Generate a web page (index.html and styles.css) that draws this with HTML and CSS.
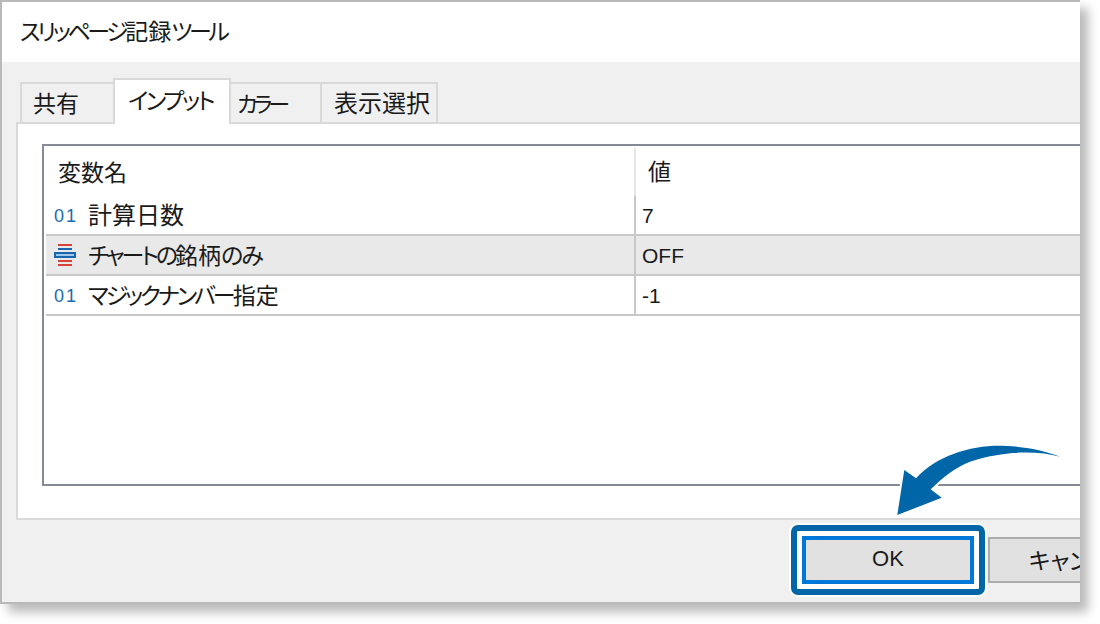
FILE: index.html
```html
<!DOCTYPE html>
<html lang="ja">
<head>
<meta charset="utf-8">
<title>スリッページ記録ツール</title>
<link rel="stylesheet" href="styles.css">
</head>
<body>
<div class="window">
  <div class="title"><span class="kana">スリッページ</span>記録<span class="kana">ツール</span></div>
  <div class="content">
    <div class="tabs">
      <div class="tab tab-first">共有</div>
      <div class="tab tab-active">インプット</div>
      <div class="tab tab-color">カラー</div>
      <div class="tab tab-show">表示選択</div>
    </div>
    <div class="panel">
      <div class="table">
        <div class="row row-head">
          <div class="cell cell-name">変数名</div>
          <div class="cell cell-value">値</div>
        </div>
        <div class="row">
          <div class="cell cell-name"><span class="num-icon">01</span>計算日数</div>
          <div class="cell cell-value">7</div>
        </div>
        <div class="row row-alt">
          <div class="cell cell-name">
            <svg class="list-icon" viewBox="0 0 22 22" aria-hidden="true">
              <rect x="4" y="0" width="14" height="2" fill="#d8403a"/>
              <rect x="4" y="4" width="14" height="2" fill="#1a66ad"/>
              <rect x="0" y="8" width="22" height="6" fill="#1a66ad"/>
              <rect x="2" y="10" width="18" height="2" fill="#9cc8ec"/>
              <rect x="4" y="16" width="14" height="2" fill="#d8403a"/>
              <rect x="4" y="20" width="14" height="2" fill="#d8403a"/>
            </svg><span class="name-text"><span class="kana-row">チャートの</span>銘柄<span class="hira">のみ</span></span></div>
          <div class="cell cell-value">OFF</div>
        </div>
        <div class="row">
          <div class="cell cell-name"><span class="num-icon">01</span><span class="name-text"><span class="kana-row">マジックナンバー</span>指定</span></div>
          <div class="cell cell-value">-1</div>
        </div>
      </div>
    </div>
    <div class="footer">
      <div class="ok-ring"><div class="btn btn-ok">OK</div></div>
      <div class="btn btn-cancel">キャンセル</div>
    </div>
  </div>
  <svg class="arrow" viewBox="0 0 180 90" aria-hidden="true">
    <path d="M9.3 79 L16.3 34 L28 42.3 C50 18 88 8 118.7 10 C140 11 158 15 172 20.7 C150 15 118 14 82 25.7 C68 31 54 42 42.7 53.3 L53.7 61.7 Z" fill="#0066a8" stroke="#fff" stroke-width="4" paint-order="stroke"/>
  </svg>
</div>
</body>
</html>
```
FILE: styles.css
```css
* { box-sizing: border-box; }
html, body { margin: 0; padding: 0; background: #fff; }
body {
  width: 1100px;
  height: 624px;
  overflow: hidden;
  font-family: "Noto Sans CJK JP", "Noto Sans", sans-serif;
  font-size: 24px;
  color: #1a1a1a;
  font-feature-settings: "palt";
}
.kana { letter-spacing: -3.4px; }
.kana-row { letter-spacing: -3px; }
.hira { letter-spacing: -2px; }
.name-text { font-size: 23px; }
.window {
  position: relative;
  width: 1080px;
  height: 604px;
  border: 2px solid #b9b9b9;
  border-right: 0;
  background: #f0f0f0;
  display: flex;
  flex-direction: column;
  box-shadow: 8px 8px 10px rgba(0, 0, 0, 0.28);
}
.title {
  height: 60px;
  flex: none;
  background: #fff;
  padding: 0 0 4px 18px;
  display: flex;
  align-items: center;
  font-size: 23px;
}
.content {
  flex: 1;
  min-height: 0;
  overflow: hidden;
  padding: 16px 0 0 14px;
}
.tabs {
  display: flex;
  align-items: flex-end;
  height: 46px;
  padding-left: 4px;
  position: relative;
  z-index: 1;
  margin-bottom: -2px;
}
.tab {
  height: 40px;
  flex: none;
  border: 2px solid #d9d9d9;
  border-bottom: 0;
  margin-left: -2px;
  margin-bottom: 2px;
  display: flex;
  align-items: center;
  line-height: 1;
  padding-bottom: 2px;
  font-size: 23px;
}
.tab-first { width: 95px; margin-left: 0; padding-left: 11px; }
.tab-active { width: 118px; height: 46px; margin-bottom: 0; background: #fff; padding: 0 0 6px 13px; position: relative; z-index: 1; letter-spacing: -2.4px; }
.tab-color { width: 93px; padding-left: 6px; font-size: 22px; letter-spacing: -4px; }
.tab-show { width: 118px; padding-left: 12px; font-size: 24px; }
.panel {
  width: 1100px;
  height: 398px;
  background: #fff;
  border: 2px solid #d9d9d9;
  padding: 20px 0 0 24px;
}
.table {
  width: 1100px;
  height: 342px;
  border: 2px solid #868a96;
  padding-left: 2px;
}
.row {
  display: flex;
  height: 40px;
  border-bottom: 2px solid #c8c8c8;
}
.row-head { height: 50px; border-bottom: 0; }
.row-alt { background: #e9e9e9; }
.cell { display: flex; align-items: center; line-height: 1; }
.cell-name {
  width: 590px;
  flex: none;
  padding: 0 0 2px 8px;
  border-right: 2px solid #c8c8c8;
}
.row-head .cell-name {
  padding-left: 12px;
  border-right-color: #e5e5e5;
  margin-top: 2px;
  font-size: 23px;
}
.row-head .cell { padding-bottom: 2px; }
.cell-value { padding: 0 0 0 6px; font-family: "Liberation Sans", "Noto Sans CJK JP", sans-serif; font-size: 21px; }
.row-head .cell-value { padding: 0 0 2px 12px; font-family: "Noto Sans CJK JP", sans-serif; font-size: 23px; }
.num-icon {
  width: 34px;
  flex: none;
  padding-top: 3px;
  font-family: "Liberation Sans", sans-serif;
  font-size: 18px;
  color: #1a6bad;
  letter-spacing: 2px;
}
.list-icon { width: 22px; height: 22px; flex: none; margin: 2px 12px 0 0; }
.footer {
  display: flex;
  align-items: center;
  margin-top: 5px;
  padding-left: 775px;
  width: 1300px;
}
.ok-ring {
  flex: none;
  border: 6px solid #0066a8;
  border-radius: 7px;
  padding: 5px;
  background: #fff;
  box-shadow: 0 0 0 2px #fff;
}
.btn {
  display: flex;
  align-items: center;
  justify-content: center;
  background: #e1e1e1;
  height: 46px;
  line-height: 1;
  padding-bottom: 2px;
}
.btn-ok {
  width: 172px;
  height: 48px;
  border: 4px solid #0078d7;
  font-family: "Liberation Sans", sans-serif;
  font-size: 22px;
}
.btn-cancel {
  flex: none;
  width: 186px;
  margin-left: 3px;
  border: 2px solid #adadad;
  font-size: 23px;
}
.arrow {
  position: absolute;
  left: 886px;
  top: 434px;
  width: 180px;
  height: 90px;
}
```
